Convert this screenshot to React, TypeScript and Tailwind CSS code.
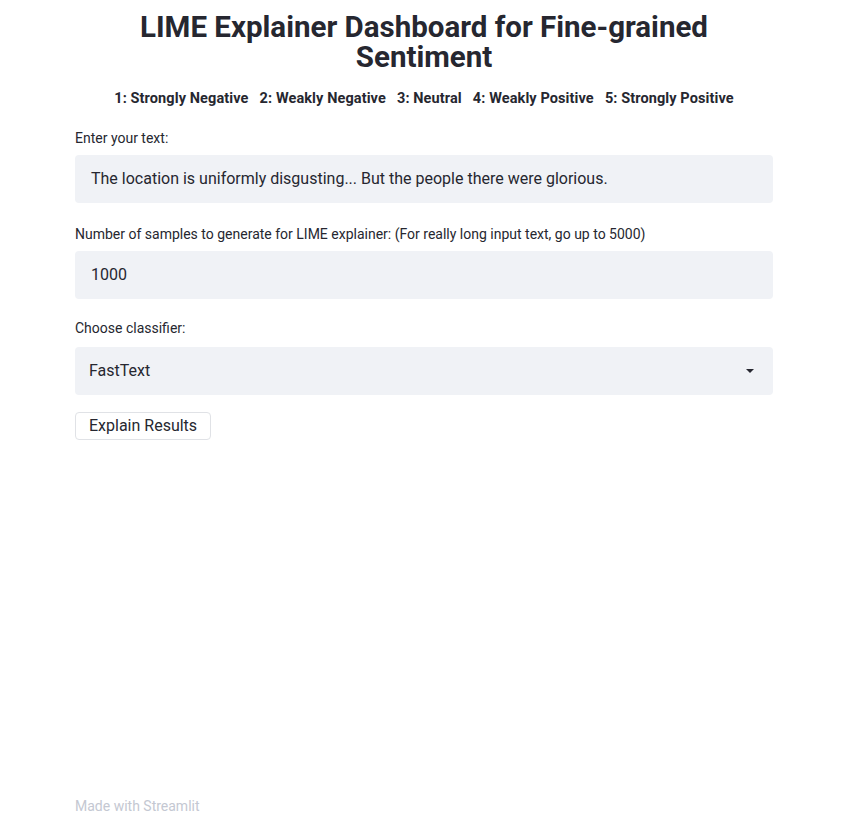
import React from 'react';

const font = { fontFamily: 'Roboto, "Noto Sans", sans-serif' };

const Label: React.FC<{ children: React.ReactNode; gap?: string }> = ({ children, gap = 'mb-[7px]' }) => (
  <div className={`${gap} text-[14px] leading-[20px] text-[#262730]`}>{children}</div>
);

const Box: React.FC<{ children: React.ReactNode }> = ({ children }) => (
  <div className="flex h-[48px] items-center rounded-[4px] bg-[#f0f2f6] px-[16px] text-[16px] text-[#262730]">
    {children}
  </div>
);

export default function App() {
  return (
    <div className="flex h-[825px] w-[855px] flex-col bg-white" style={font}>
      <div className="ml-[75px] w-[698px] flex-1">
        <h1 className="mt-[12px] text-center text-[29.5px] font-bold leading-[30px] text-[#262730]">
          LIME Explainer Dashboard for Fine-grained
          <br />
          Sentiment
        </h1>
        <p className="mt-[16px] text-center text-[14.5px] font-bold tracking-[0.1px] text-[#262730]">
          1: Strongly Negative&nbsp;&nbsp; 2: Weakly Negative&nbsp;&nbsp; 3: Neutral&nbsp;&nbsp; 4: Weakly
          Positive&nbsp;&nbsp; 5: Strongly Positive
        </p>

        <div className="mt-[18px]">
          <Label>Enter your text:</Label>
          <Box>The location is uniformly disgusting... But the people there were glorious.</Box>
        </div>

        <div className="mt-[21px]">
          <Label>Number of samples to generate for LIME explainer: (For really long input text, go up to 5000)</Label>
          <Box>1000</Box>
        </div>

        <div className="mt-[19px]">
          <Label gap="mb-[9px]">Choose classifier:</Label>
          <div className="flex h-[48px] items-center justify-between rounded-[4px] bg-[#f0f2f6] pl-[14px] pr-[18px] text-[16px] text-[#262730]">
            <span>FastText</span>
            <svg width="10" height="6" viewBox="0 0 10 6">
              <path d="M1 1h8L5 5z" fill="#262730" />
            </svg>
          </div>
        </div>

        <button className="mt-[17px] h-[28px] rounded-[4px] border border-[#e0e2e6] bg-white px-[13px] text-[16px] text-[#262730]">
          Explain Results
        </button>
      </div>
      <div className="mb-[8px] ml-[75px] w-[698px] text-[14px] text-[#c4c8d2]">Made with Streamlit</div>
    </div>
  );
}
